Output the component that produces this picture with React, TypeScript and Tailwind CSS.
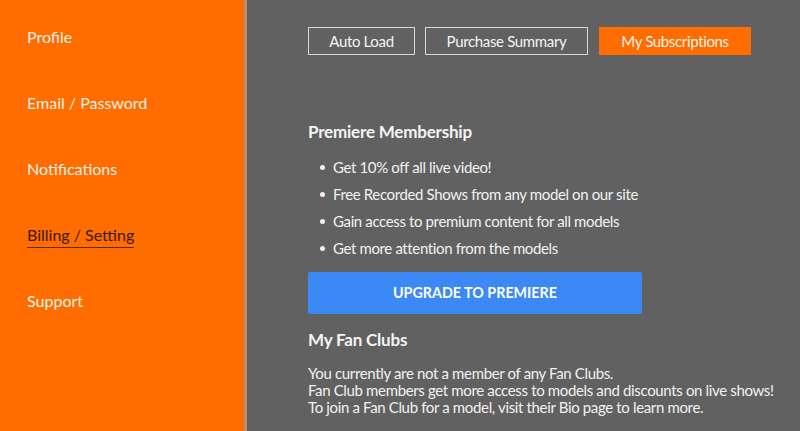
import React from "react";

const navItems = ["Profile", "Email / Password", "Notifications", "Billing / Setting", "Support"];
const bullets = [
  "Get 10% off all live video!",
  "Free Recorded Shows from any model on our site",
  "Gain access to premium content for all models",
  "Get more attention from the models",
];

export default function App() {
  return (
    <div className="flex h-[431px] w-[800px] overflow-hidden font-['Lato',sans-serif]">
      <aside className="w-[247px] shrink-0 bg-[#ff6c00] border-r-[3px] border-[#bf8b6c] pt-[25px] pl-[27px] flex flex-col gap-[42px]">
        {navItems.map((item) => {
          const active = item === "Billing / Setting";
          return (
            <div key={item} className="h-[24px]">
              <span
                className={
                  active
                    ? "inline-block text-[16px] leading-[24px] text-[#3a1a06] border-b border-[#5a2a0a]"
                    : "inline-block text-[16px] leading-[24px] text-[#fff3e8]"
                }
              >
                {item}
              </span>
            </div>
          );
        })}
      </aside>
      <main className="flex-1 bg-[#616161] pl-[61px] pt-[27px] text-[#f2f2f2]">
        <div className="flex">
          <button className="w-[107px] h-[28px] border border-[#d8d8d8] text-[15px] tracking-[-0.35px] text-[#f4f4f4]">Auto Load</button>
          <button className="ml-[10px] w-[163px] h-[28px] border border-[#d8d8d8] text-[15px] tracking-[-0.35px] text-[#f4f4f4]">Purchase Summary</button>
          <button className="ml-[11px] w-[152px] h-[28px] bg-[#ff6c00] text-[15px] tracking-[-0.35px] text-[#fff4ea]">My Subscriptions</button>
        </div>
        <h2 className="mt-[65px] text-[17px] leading-[24px] font-bold tracking-[-0.2px] text-[#f4f4f4]">Premiere Membership</h2>
        <ul className="mt-[10px]">
          {bullets.map((b) => (
            <li key={b} className="flex items-center h-[27px] pl-[12px] text-[15px] tracking-[-0.37px]">
              <span className="w-[5px] h-[5px] rounded-full bg-[#f2f2f2] mr-[8px]" />
              {b}
            </li>
          ))}
        </ul>
        <button className="mt-[10px] w-[334px] h-[42px] rounded-[2px] bg-[#3c88f5] text-[14.3px] font-bold text-white">
          UPGRADE TO PREMIERE
        </button>
        <h2 className="mt-[14px] text-[17px] leading-[24px] font-bold tracking-[-0.2px] text-[#f4f4f4]">My Fan Clubs</h2>
        <p className="mt-[13px] text-[15px] leading-[17px] tracking-[-0.35px]">
          You currently are not a member of any Fan Clubs.
          <br />
          Fan Club members get more access to models and discounts on live shows!
          <br />
          To join a Fan Club for a model, visit their Bio page to learn more.
        </p>
      </main>
    </div>
  );
}
